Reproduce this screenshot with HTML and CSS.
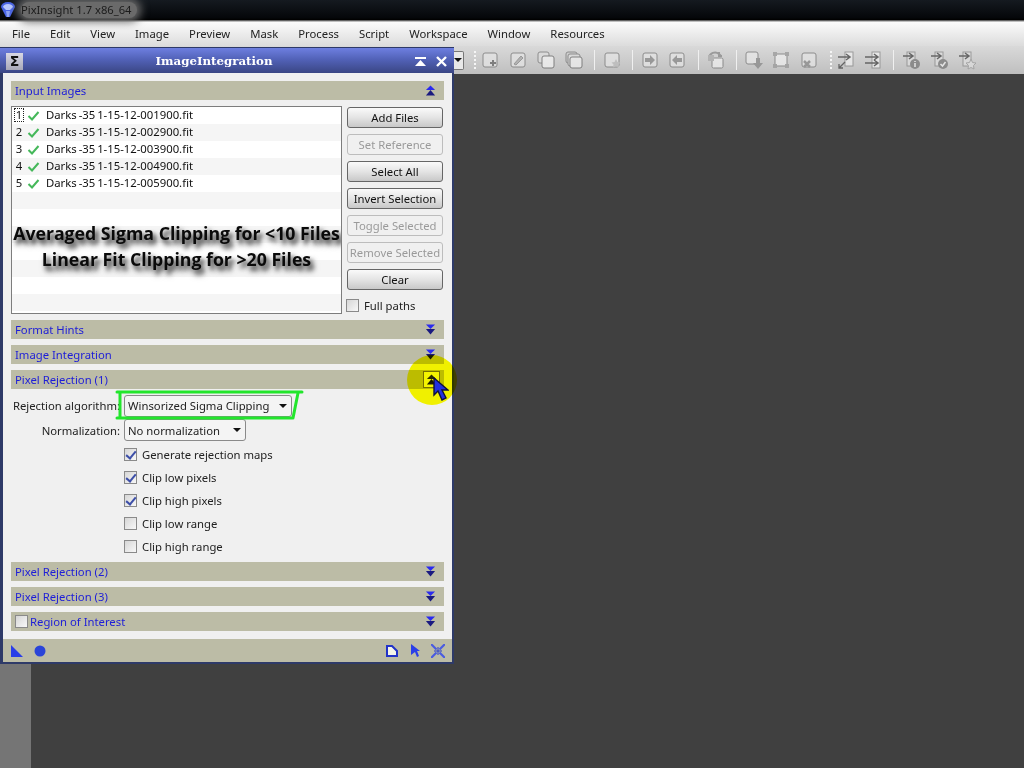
FILE: index.html
```html
<!DOCTYPE html>
<html lang="en">
<head>
<meta charset="utf-8">
<title>PixInsight 1.7 x86_64</title>
<link rel="stylesheet" href="styles.css">
</head>
<body>
<svg class="defs" width="0" height="0" aria-hidden="true">
  <defs>
    <symbol id="down" viewBox="0 0 12 13"><path d="M1 1h10L6 6z" fill="#2a2af0"/><path d="M1 6h10l-5 6z" fill="#1a1a80"/></symbol>
    <symbol id="up" viewBox="0 0 12 13"><path d="M6 1l5 5H1z" fill="#2a2af0"/><path d="M6 6l5 6H1z" fill="#1a1a80"/></symbol>
    <symbol id="tb-page" viewBox="0 0 20 20"><rect x="3" y="3" width="14" height="14" rx="2" fill="#e4e4e4" stroke="#777"/></symbol>
  </defs>
</svg>
<div class="app">
  <header class="titlebar">
    <svg class="logo" width="16" height="18" viewBox="0 0 16 18"><path d="M1 6a7 5 0 0 1 14 0l-5 10H6z" fill="#4a66e8"/><path d="M3 6a5 3 0 0 1 10 0l-3 3H6z" fill="#b8c8ff"/><path d="M6 10h4l-1 6H7z" fill="#8fa4f5"/></svg>
    <span class="apptitle">PixInsight 1.7 x86_64</span>
  </header>
  <nav class="menubar">
    <span class="menu">File</span><span class="menu">Edit</span><span class="menu">View</span><span class="menu">Image</span><span class="menu">Preview</span><span class="menu">Mask</span><span class="menu">Process</span><span class="menu">Script</span><span class="menu">Workspace</span><span class="menu">Window</span><span class="menu">Resources</span>
  </nav>
  <div class="toolbar">
    <span class="tb-combo"><i class="caret"></i></span>
    <i class="tb-dots"></i>
    <span class="tb"><svg viewBox="0 0 20 20"><use href="#tb-page"/><path d="M10 13h6M13 10v6" stroke="#666" stroke-width="2"/></svg></span>
    <span class="tb"><svg viewBox="0 0 20 20"><use href="#tb-page"/><path d="M6 14l7-8 2 2-7 7z" fill="#aaa" stroke="#888"/></svg></span>
    <span class="tb"><svg viewBox="0 0 20 20"><rect x="2" y="2" width="11" height="11" rx="2" fill="#ddd" stroke="#777"/><rect x="6" y="6" width="12" height="12" rx="2" fill="#f2f2f2" stroke="#666"/></svg></span>
    <span class="tb"><svg viewBox="0 0 20 20"><rect x="2" y="2" width="11" height="11" rx="2" fill="#ccc" stroke="#777"/><rect x="4" y="4" width="12" height="12" rx="2" fill="#ddd" stroke="#777"/><rect x="6" y="7" width="12" height="11" rx="2" fill="#eee" stroke="#666"/></svg></span>
    <i class="tb-sep"></i>
    <span class="tb"><svg viewBox="0 0 20 20"><use href="#tb-page"/><path d="M14 9l1.500 3 3 .5-2 2 .5 3-3-1.500-3 1.500.5-3-2-2 3-.5z" fill="#bbb"/></svg></span>
    <i class="tb-sep"></i>
    <span class="tb"><svg viewBox="0 0 20 20"><use href="#tb-page"/><path d="M5 8h5V5l5 5-5 5v-3H5z" fill="#888"/></svg></span>
    <span class="tb t7"><svg viewBox="0 0 20 20"><use href="#tb-page"/><path d="M15 8h-5V5l-5 5 5 5v-3h5z" fill="#888"/></svg></span>
    <i class="tb-sep wide-sep"></i>
    <span class="tb"><svg viewBox="0 0 20 20"><rect x="6" y="8" width="11" height="10" rx="1.500" fill="#eee" stroke="#777"/><path d="M3 8a6 6 0 0 1 10-4l2 2M13 2v4h3" fill="none" stroke="#888" stroke-width="2"/><rect x="2" y="5" width="6" height="6" fill="#aaa"/></svg></span>
    <i class="tb-sep"></i>
    <span class="tb"><svg viewBox="0 0 20 20"><rect x="2" y="2" width="12" height="12" rx="2" fill="#e8e8e8" stroke="#777"/><path d="M12 8h4v5h3l-5 6-5-6h3z" fill="#888"/></svg></span>
    <span class="tb t7"><svg viewBox="0 0 20 20"><rect x="4" y="4" width="12" height="12" fill="#eee" stroke="#777"/><path d="M2 2h4v4H2zM14 2h4v4h-4zM2 14h4v4H2zM14 14h4v4h-4z" fill="#999"/></svg></span>
    <span class="tb"><svg viewBox="0 0 20 20"><use href="#tb-page"/><path d="M5 11l6 6M11 11l-6 6" stroke="#888" stroke-width="2.500"/></svg></span>
    <i class="tb-dots d2"></i>
    <span class="tb"><svg viewBox="0 0 20 20"><rect x="9" y="2" width="8" height="14" fill="#eee" stroke="#888"/><path d="M2 7h11M10 4l4 3-4 3" fill="none" stroke="#444" stroke-width="1.500"/><path d="M3 18l6-6M3 14v4h4" fill="none" stroke="#444" stroke-width="1.300"/></svg></span>
    <span class="tb t7"><svg viewBox="0 0 20 20"><rect x="9" y="2" width="8" height="16" fill="#eee" stroke="#888"/><path d="M2 7h12M11 4l4 3-4 3M2 13h12M11 10l4 3-4 3" fill="none" stroke="#444" stroke-width="1.500"/></svg></span>
    <i class="tb-sep"></i>
    <span class="tb"><svg viewBox="0 0 20 20"><rect x="6" y="2" width="8" height="14" fill="#ddd" stroke="#888"/><path d="M2 6h9M8 3l4 3-4 3" fill="none" stroke="#444" stroke-width="1.500"/><circle cx="14" cy="14" r="5" fill="#777"/><path d="M14 11v1M14 13v4" stroke="#eee" stroke-width="1.500"/></svg></span>
    <span class="tb"><svg viewBox="0 0 20 20"><rect x="6" y="2" width="8" height="14" fill="#ddd" stroke="#888"/><path d="M2 6h9M8 3l4 3-4 3" fill="none" stroke="#444" stroke-width="1.500"/><circle cx="14" cy="14" r="5" fill="#777"/><path d="M11.500 14l2 2 3-4" fill="none" stroke="#eee" stroke-width="1.500"/></svg></span>
    <span class="tb"><svg viewBox="0 0 20 20"><rect x="6" y="2" width="8" height="14" fill="#ddd" stroke="#888"/><path d="M2 6h9M8 3l4 3-4 3" fill="none" stroke="#444" stroke-width="1.500"/><path d="M14 9l1.500 3.500 3.500.5-2.500 2.500.5 3.500-3-1.500-3 1.500.5-3.500L9 13l3.500-.5z" fill="#ddd" stroke="#999"/></svg></span>
  </div>
  <main class="workspace"><div class="lower-strip"></div></main>
</div>

<section class="window">
  <div class="win-title">
    <span class="sigma">Σ</span>
    <span class="win-name">ImageIntegration</span>
    <svg class="win-shade" width="11" height="9" viewBox="0 0 11 9"><path d="M0 0h11v2H0zM5.500 3L11 9H0z" fill="#fff"/></svg>
    <svg class="win-close" width="11" height="11" viewBox="0 0 11 11"><path d="M1 1l9 9M10 1l-9 9" stroke="#fff" stroke-width="2.400"/></svg>
  </div>
  <div class="win-body">
    <div class="sec"><span>Input Images</span><svg class="arrow"><use href="#up"/></svg></div>
    <div class="input-pane">
      <div class="list">
        <div class="row"><span class="num focus">1</span><svg class="ok" viewBox="0 0 12 10"><path d="M1 5l3.500 3.500L11 1" fill="none" stroke="#45b85a" stroke-width="2"/></svg><span class="fname">Darks -35 1-15-12-001900.fit</span></div>
        <div class="row"><span class="num">2</span><svg class="ok" viewBox="0 0 12 10"><path d="M1 5l3.500 3.500L11 1" fill="none" stroke="#45b85a" stroke-width="2"/></svg><span class="fname">Darks -35 1-15-12-002900.fit</span></div>
        <div class="row"><span class="num">3</span><svg class="ok" viewBox="0 0 12 10"><path d="M1 5l3.500 3.500L11 1" fill="none" stroke="#45b85a" stroke-width="2"/></svg><span class="fname">Darks -35 1-15-12-003900.fit</span></div>
        <div class="row"><span class="num">4</span><svg class="ok" viewBox="0 0 12 10"><path d="M1 5l3.500 3.500L11 1" fill="none" stroke="#45b85a" stroke-width="2"/></svg><span class="fname">Darks -35 1-15-12-004900.fit</span></div>
        <div class="row"><span class="num">5</span><svg class="ok" viewBox="0 0 12 10"><path d="M1 5l3.500 3.500L11 1" fill="none" stroke="#45b85a" stroke-width="2"/></svg><span class="fname">Darks -35 1-15-12-005900.fit</span></div>
        <div class="row"></div><div class="row"></div><div class="row"></div><div class="row"></div><div class="row"></div><div class="row"></div><div class="row"></div>
        <div class="caption"><div>Averaged Sigma Clipping for &lt;10 Files</div><div>Linear Fit Clipping for &gt;20 Files</div></div>
      </div>
      <div class="actions">
        <button class="btn">Add Files</button>
        <button class="btn off">Set Reference</button>
        <button class="btn">Select All</button>
        <button class="btn">Invert Selection</button>
        <button class="btn off">Toggle Selected</button>
        <button class="btn off">Remove Selected</button>
        <button class="btn">Clear</button>
        <label class="check full"><i class="box"></i>Full paths</label>
      </div>
    </div>
    <div class="sec"><span>Format Hints</span><svg class="arrow"><use href="#down"/></svg></div>
    <div class="sec"><span>Image Integration</span><svg class="arrow"><use href="#down"/></svg></div>
    <div class="sec"><span>Pixel Rejection (1)</span><span class="hot"><svg class="arrow"><use href="#up"/></svg></span></div>
    <div class="form">
      <label class="f-label">Rejection algorithm:</label>
      <div class="combo wide">Winsorized Sigma Clipping<i class="caret"></i></div>
      <label class="f-label">Normalization:</label>
      <div class="combo narrow">No normalization<i class="caret"></i></div>
      <label class="check opt"><i class="box on"></i>Generate rejection maps</label>
      <label class="check opt"><i class="box on"></i>Clip low pixels</label>
      <label class="check opt"><i class="box on"></i>Clip high pixels</label>
      <label class="check opt"><i class="box"></i>Clip low range</label>
      <label class="check opt"><i class="box"></i>Clip high range</label>
      <svg class="marker" width="192" height="34" viewBox="0 0 192 34"><path d="M2 3h185M5 3v26M183 4l-5 25M2 29h176" fill="none" stroke="#22e62c" stroke-width="3" stroke-linecap="round"/></svg>
    </div>
    <div class="sec"><span>Pixel Rejection (2)</span><svg class="arrow"><use href="#down"/></svg></div>
    <div class="sec"><span>Pixel Rejection (3)</span><svg class="arrow"><use href="#down"/></svg></div>
    <div class="sec"><span class="roi"><i class="box"></i>Region of Interest</span><svg class="arrow"><use href="#down"/></svg></div>
  </div>
  <div class="win-foot">
    <svg width="12" height="12" viewBox="0 0 12 12"><path d="M0 0l12 12H0z" fill="#2a3ee8"/></svg>
    <svg class="f-circle" width="12" height="12" viewBox="0 0 12 12"><circle cx="6" cy="6" r="5.500" fill="#2a44d8"/></svg>
    <svg class="f-doc" width="12" height="12" viewBox="0 0 12 12"><path d="M1 1h5l5 5v5H1z" fill="#f4f4e8" stroke="#2233c8" stroke-width="2"/></svg>
    <svg class="f-arrow" width="9" height="13" viewBox="0 0 9 13"><path d="M0 0l9 7H6l2 5-2 1-2-5-4 3z" fill="#2a3ee8"/></svg>
    <svg class="f-shrink" width="14" height="14" viewBox="0 0 14 14"><path d="M0 0l5.500 5.500M14 0L8.500 5.500M0 14l5.500-5.500M14 14L8.500 8.500" stroke="#4a5ce0" stroke-width="2.200"/><path d="M7 3v8M3 7h8" stroke="#2a3ec8" stroke-width="1"/></svg>
  </div>
  <div class="spot"></div>
  <svg class="cursor" width="16" height="24" viewBox="0 0 16 24"><path d="M1 1v17l4-4 4 9 4-2-4-8h6z" fill="#2230e0" stroke="#10103a" stroke-width="1.400"/></svg>
</section>
</body>
</html>
```
FILE: styles.css
```css
* { box-sizing: border-box; }
html, body { margin: 0; height: 768px; overflow: hidden; }
body { font: 11.300px "Noto Sans", "Open Sans", sans-serif; color: #111; background: #404040; }
.defs { position: absolute; }
.app { display: flex; flex-direction: column; height: 768px; }

.titlebar { height: 22px; display: flex; align-items: center; background: linear-gradient(#151a20, #05070a 80%, #000 90%, #9a9a9a 95%, #ddd); padding-bottom: 3px; position: relative; }
.logo { flex: none; }
.apptitle { margin-left: 5px; color: #1b1b1b; font-size: 11.200px; padding: 1px 6px 1px 0; background: #6a6a6a; border-radius: 8px; box-shadow: 0 0 8px 4px #6a6a6a; line-height: 14px; }

.menubar { height: 24px; display: flex; align-items: center; padding: 0 0 2px 12px; gap: 20px; background: linear-gradient(#fbfbfb, #dcdcdc); }
.menu { color: #222; }

.toolbar { height: 28px; display: flex; align-items: center; padding-left: 454px; background: linear-gradient(#d9d9d9, #bfbfbf); }
.tb-combo { width: 10px; height: 19px; display: flex; align-items: center; background: #e8e8e8; border: 1px solid #777; border-left: 0; border-radius: 0 2px 2px 0; }
.tb-combo .caret { border-width: 4px 4px 0; }
.tb-dots { width: 2px; height: 18px; margin-left: 10px; flex: none; background: repeating-linear-gradient(#f5f5f5 0 2px, transparent 2px 4px); }
.tb-dots.d2 { margin-left: 11px; }
.tb { width: 20px; height: 20px; margin-left: 8px; flex: none; display: block; opacity: .75; }
.tb.t7 { margin-left: 7px; }
.tb-dots + .tb { margin-left: 4px; }
.tb svg { width: 20px; height: 20px; display: block; }
.tb-sep { width: 1px; height: 20px; background: #f0f0f0; margin-left: 10px; flex: none; }
.tb-sep.wide-sep { margin-left: 11px; }
.tb-sep + .tb { margin-left: 7px; }

.workspace { flex: 1; display: flex; flex-direction: column; justify-content: flex-end; background: #404040; }
.lower-strip { width: 31px; height: 104px; background: #757575; }

.window { position: absolute; left: 0; top: 47px; width: 454px; height: 617px; display: flex; flex-direction: column; background: #f0f0f0; border: solid #2e3a68; border-width: 1px 2px 2px 3px; }
.win-title { height: 25px; margin: 0 -2px 0 -3px; flex: none; display: flex; align-items: center; position: relative; background: linear-gradient(#6e7fe0, #5262b8 45%, #3a4684); padding: 1px 7px 0 6px; color: #fff; }
.sigma { width: 17px; height: 17px; display: flex; align-items: center; justify-content: center; background: linear-gradient(#d8d8e4, #a8a8b8); color: #111; font: bold 14px "DejaVu Sans", sans-serif; }
.win-name { position: absolute; left: 0; right: 26px; text-align: center; font: bold 11.800px "DejaVu Serif", serif; }
.win-shade { margin-left: auto; }
.win-close { margin-left: 10px; }

.win-body { flex: 1; min-height: 0; display: flex; flex-direction: column; padding: 8px 8px 0; }
.sec { height: 19px; flex: none; display: flex; align-items: center; justify-content: space-between; padding: 0 8px 0 4px; margin-bottom: 6px; background: #bcbca6; color: #1d1dd8; }
.arrow { width: 11px; height: 13px; flex: none; display: block; }
.hot { width: 17px; height: 17px; margin-right: -4px; display: flex; align-items: center; justify-content: center; border: 1px solid #77701c; background: #f4f48c; }
.roi { display: flex; align-items: center; gap: 2px; }

.input-pane { display: flex; gap: 5px; margin-bottom: 6px; height: 208px; flex: none; }
.list { width: 331px; flex: none; position: relative; background: #fff; border: 1px solid #7d7d7d; overflow: hidden; }
.row { height: 17px; display: flex; align-items: center; padding: 0 0 2px 2px; }
.row:nth-child(even) { background: #f5f5f5; }
.num { width: 10px; text-align: center; line-height: 14px; }
.focus { outline: 1px dotted #222; outline-offset: -1px; }
.ok { width: 13px; height: 10px; margin: 2px 6px 0 3px; flex: none; }
.fname { word-spacing: -1px; }
.caption { position: absolute; left: 0; right: 0; top: 114px; text-align: center; font: bold 17.700px/25.500px "Open Sans", sans-serif; color: #0a0a0a; text-shadow: 3px 4px 4px #555, 3px 5px 6px #777; white-space: nowrap; }

.actions { width: 97px; flex: none; padding-top: 1px; display: flex; flex-direction: column; gap: 6px; }
.btn { width: 96px; height: 21px; flex: none; padding: 0; font: 11.300px "Noto Sans", sans-serif; color: #111; border: 1px solid #666; border-radius: 3px; background: linear-gradient(#fafafa, #e4e4e4 50%, #c8c8c8); white-space: nowrap; overflow: hidden; }
.btn.off { color: #9a9a9a; border-color: #bdbdbd; background: #f0f0f0; }

.check { display: flex; align-items: center; gap: 5px; color: #222; }
.full { height: 18px; margin-left: -1px; flex: none; }
.box { width: 13px; height: 13px; flex: none; display: block; border: 1px solid #8a8a8a; background: linear-gradient(135deg, #d6d6d6, #f8f8f8); position: relative; }
.box.on::after { content: ""; position: absolute; left: 3px; top: 0; width: 4px; height: 8px; border: solid #3d4fa8; border-width: 0 2px 2px 0; transform: rotate(40deg); }

.form { flex: none; display: grid; grid-template-columns: 109px auto; grid-template-rows: 23px 26px repeat(5, 23px); column-gap: 4px; position: relative; justify-content: start; margin: -1px 0 4px; }
.f-label { text-align: right; align-self: center; white-space: nowrap; color: #222; }
.combo { height: 22px; align-self: center; display: flex; align-items: center; justify-content: space-between; padding: 0 4px 0 3px; border: 1px solid #8a8a8a; border-radius: 3px; background: #f4f4f4; color: #222; white-space: nowrap; }
.wide { width: 168px; }
.narrow { width: 122px; }
.caret { display: block; width: 0; height: 0; border-style: solid; border-width: 4px 4px 0; border-color: #111 transparent transparent; }
.opt { grid-column: 2; }
.marker { position: absolute; left: 104px; top: -5px; pointer-events: none; }

.win-foot { height: 23px; flex: none; display: flex; align-items: center; padding: 0 7px 0 8px; background: #bcbca6; }
.f-circle { margin-left: 11px; }
.f-doc { margin-left: auto; }
.f-arrow { margin-left: 13px; }
.f-shrink { margin-left: 11px; }

.spot { position: absolute; left: 404px; top: 307px; width: 50px; height: 50px; border-radius: 50%; background: #ffff00; mix-blend-mode: multiply; pointer-events: none; }
.cursor { position: absolute; left: 430px; top: 329px; }
```
